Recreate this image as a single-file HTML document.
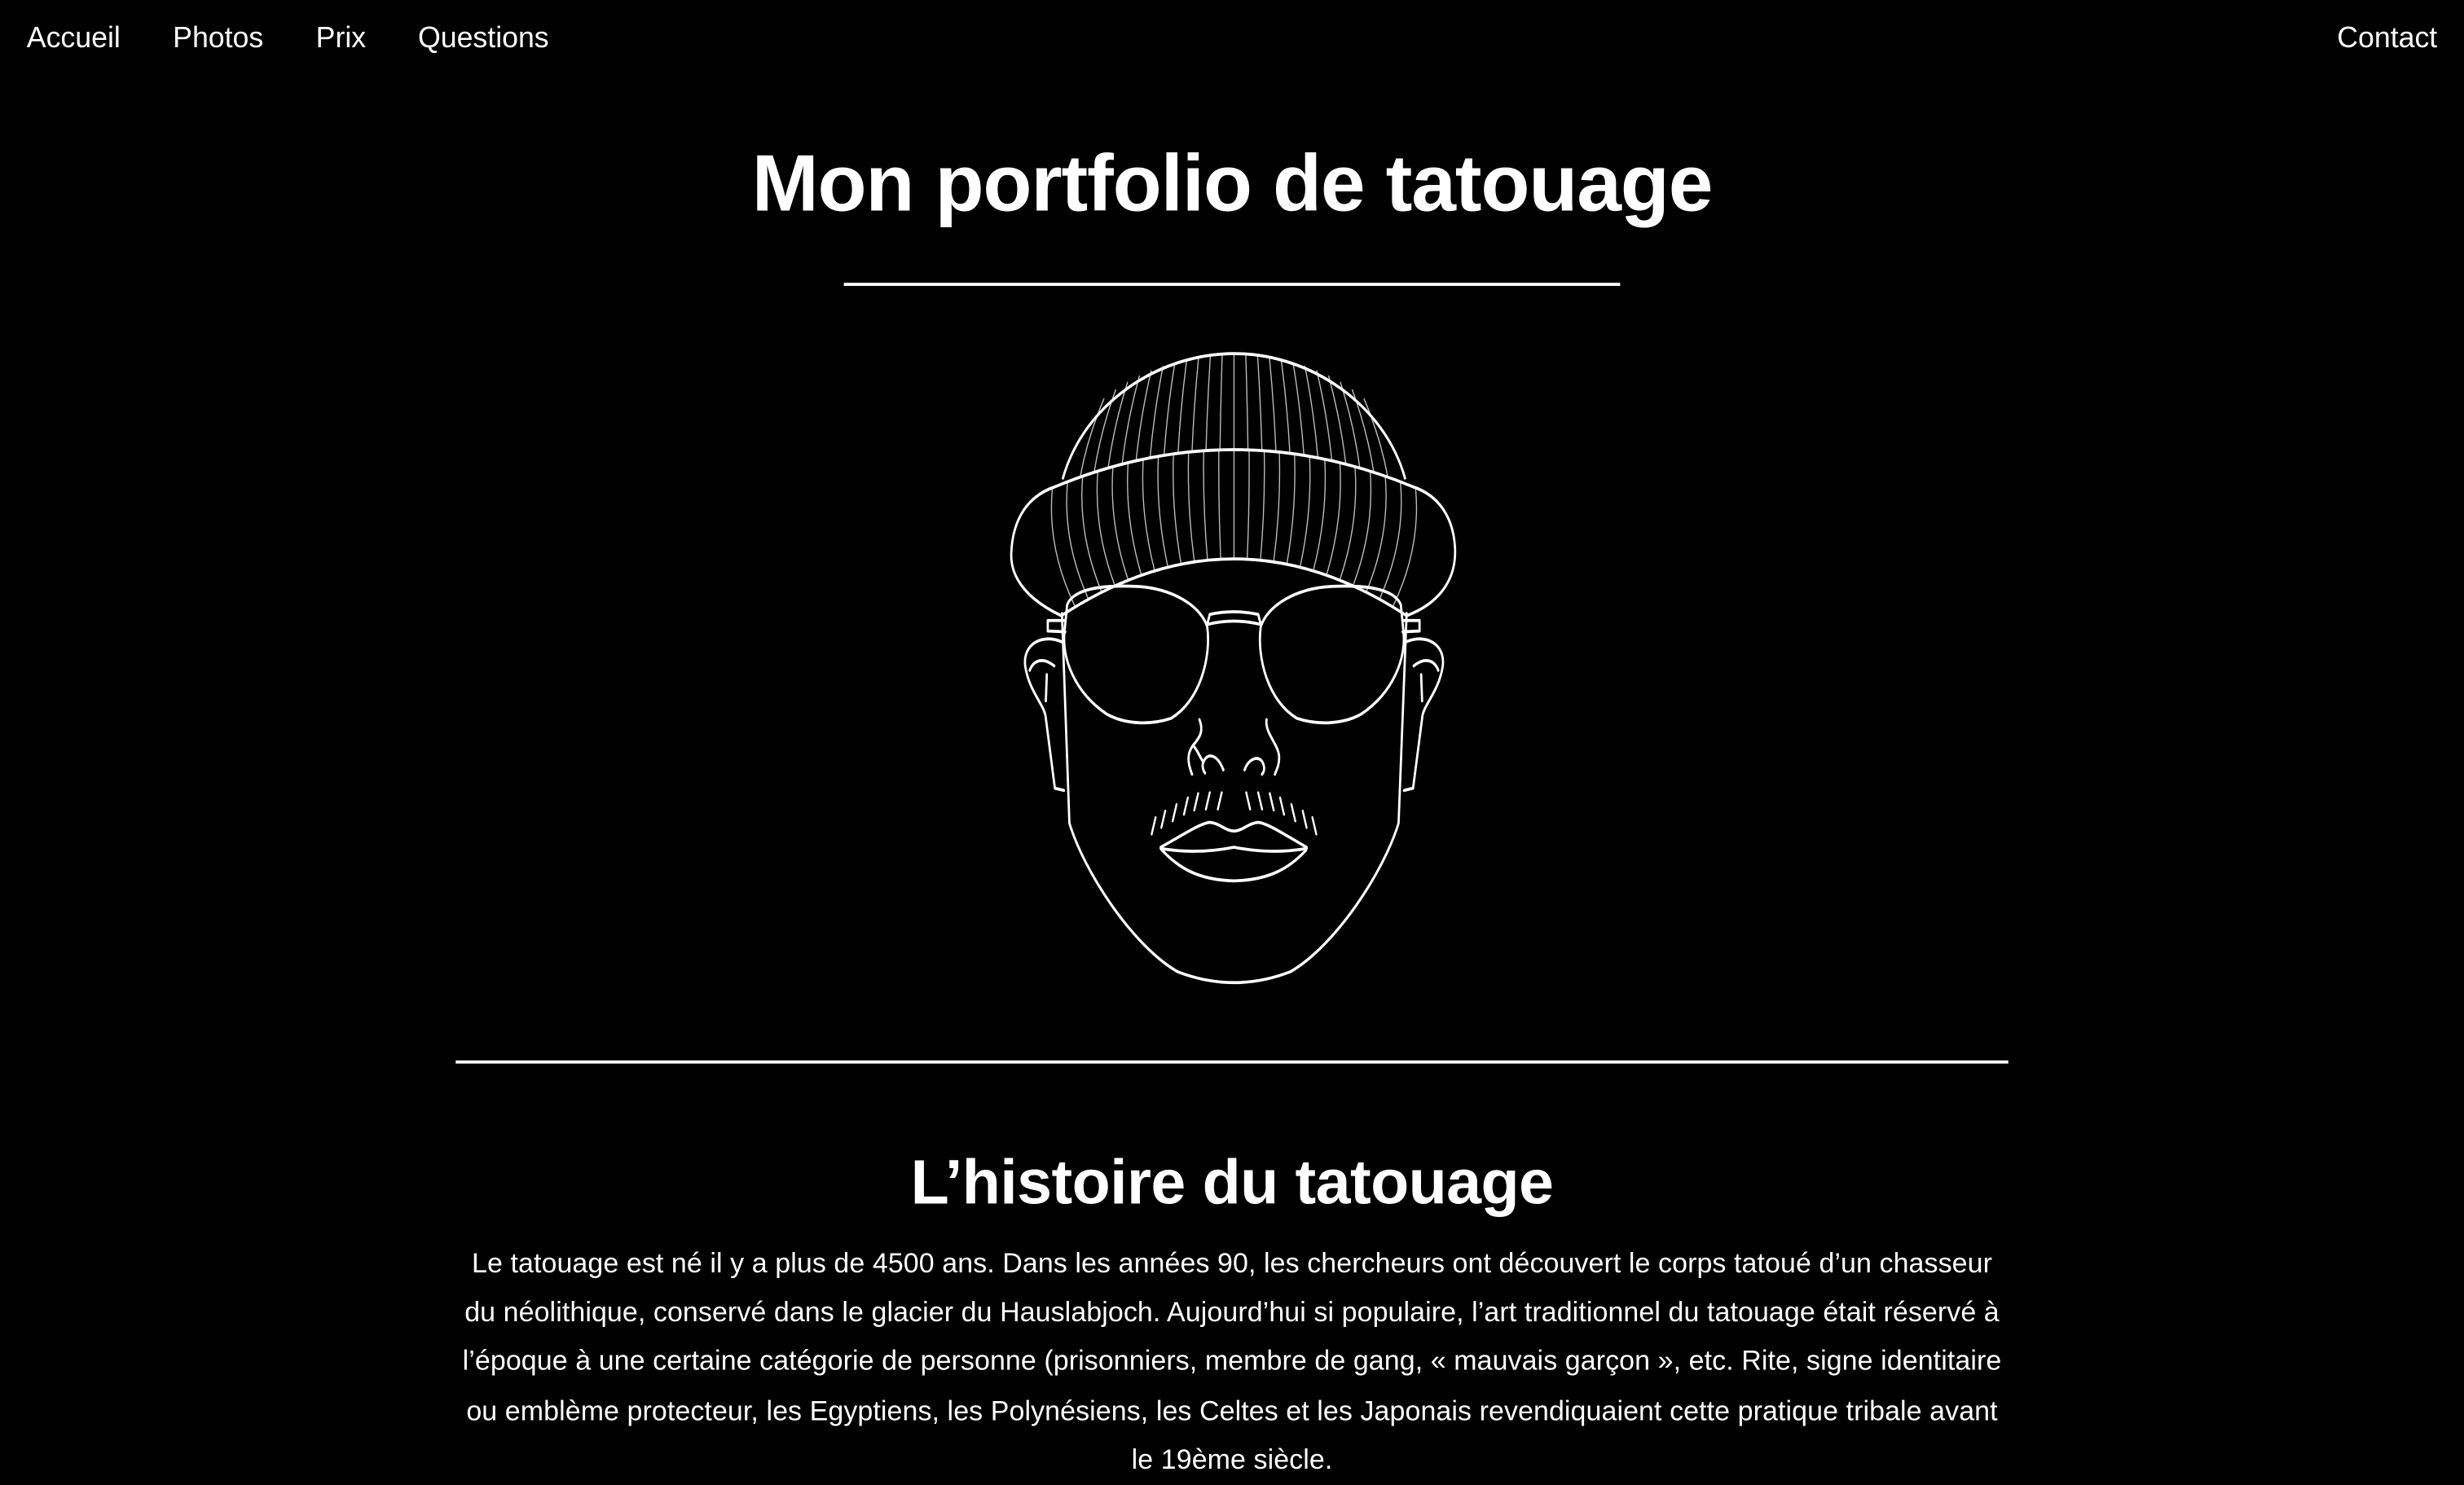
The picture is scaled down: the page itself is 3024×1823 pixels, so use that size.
<!DOCTYPE html>
<html><head><meta charset="utf-8">
<style>
html,body{margin:0;padding:0;background:#000;width:3024px;height:1784px;overflow:hidden}
#w{position:absolute;left:0;top:0;width:1568px;height:925px;transform:scale(1.928571);transform-origin:0 0;color:#fff;font-family:"Liberation Sans",Arial,sans-serif}
.n{position:absolute;top:13px;font-size:18.5px;line-height:22px}
h1{position:absolute;left:0;width:1568px;top:83px;margin:0;text-align:center;font-size:51px;line-height:68px;font-weight:bold;letter-spacing:-0.6px}
h2{position:absolute;left:0;width:1568px;top:727px;margin:0;text-align:center;font-size:40px;line-height:52px;font-weight:bold;letter-spacing:-0.3px}
.hr{position:absolute;background:#fff;height:2px}
p{position:absolute;left:188px;width:1192px;top:789px;margin:0;text-align:center;font-size:17.6px;line-height:31.2px;white-space:nowrap;letter-spacing:0.05px}
svg{position:absolute;left:622px;top:207px;width:322px;height:436px}
</style></head><body><div id="w">
<div class="n" style="left:17px">Accueil</div>
<div class="n" style="left:110px">Photos</div>
<div class="n" style="left:201px">Prix</div>
<div class="n" style="left:266px">Questions</div>
<div class="n" style="right:17px">Contact</div>
<h1>Mon portfolio de tatouage</h1>
<div class="hr" style="left:537px;width:494px;top:180px"></div>
<svg viewBox="0 0 1568 1568" preserveAspectRatio="none" fill="none" stroke="#fff" stroke-width="7" stroke-linecap="round" stroke-linejoin="round">
<g id="ribs" stroke="#bbb" stroke-width="3.5"></g>
<path d="M265,350 C330,180 560,65 795,65 C1030,65 1260,180 1325,350"/>
<path d="M260,665 C160,630 100,580 105,520 C110,440 160,390 240,370 Q795,200 1350,370 C1430,390 1475,440 1480,510 C1485,590 1420,640 1330,665"/>
<path d="M260,665 Q795,405 1330,665"/>
<path d="M262,660 L285,1140 C330,1250 480,1420 620,1480 Q795,1530 970,1480 C1110,1420 1260,1250 1305,1140 L1330,660"/>
<path d="M278,640 C300,600 400,595 492,598 C600,602 690,640 712,690 C725,760 690,860 600,900 C540,915 460,915 400,890 C300,840 260,760 270,700 Z"/>
<path d="M1312,640 C1290,600 1190,595 1098,598 C990,602 900,640 878,690 C865,760 900,860 990,900 C1050,915 1130,915 1190,890 C1290,840 1330,760 1320,700 Z"/>
<path d="M712,685 L720,662 Q795,650 870,662 L878,685 Q795,670 712,685"/>
<path d="M270,676 L218,676 L218,700 L272,702"/>
<path d="M1320,676 L1370,676 L1370,700 L1318,702"/>
<path d="M262,725 C200,705 140,730 148,780 C160,840 210,870 212,900 L240,1060 L268,1065"/>
<path d="M238,780 C205,760 175,765 162,790"/><path d="M215,800 L212,860"/>
<path d="M1328,725 C1390,705 1450,730 1442,780 C1430,840 1380,870 1378,900 L1350,1060 L1322,1065"/>
<path d="M1352,780 C1385,760 1415,765 1428,790"/><path d="M1375,800 L1378,860"/>
<path d="M688,903 C705,935 680,950 668,962 C650,980 650,1000 665,1028"/>
<path d="M668,962 C680,970 690,990 700,1000 C695,1010 700,1020 705,1025"/>
<path d="M700,1000 C715,975 745,985 762,1018"/>
<path d="M896,903 C890,935 935,960 935,990 C935,1010 925,1020 922,1028"/>
<path d="M828,1018 C840,990 880,980 888,1010 C890,1020 885,1025 882,1028"/>
<g id="mus" stroke-width="6"></g>
<path d="M568,1195 C630,1170 690,1140 720,1138 C750,1140 770,1158 795,1158 C820,1158 840,1140 870,1138 C900,1140 960,1170 1020,1195"/>
<path d="M568,1198 Q680,1212 795,1195 Q910,1212 1020,1198"/>
<path d="M570,1200 C620,1240 680,1270 795,1272 C910,1270 970,1240 1018,1202"/>
</svg>
<div class="hr" style="left:290px;width:988px;top:675px"></div>
<h2>L’histoire du tatouage</h2>
<p>Le tatouage est né il y a plus de 4500 ans. Dans les années 90, les chercheurs ont découvert le corps tatoué d’un chasseur<br>du néolithique, conservé dans le glacier du Hauslabjoch. Aujourd’hui si populaire, l’art traditionnel du tatouage était réservé à<br>l’époque à une certaine catégorie de personne (prisonniers, membre de gang, « mauvais garçon », etc. Rite, signe identitaire<br>ou emblème protecteur, les Egyptiens, les Polynésiens, les Celtes et les Japonais revendiquaient cette pratique tribale avant<br>le 19ème siècle.</p>
</div>
<script>
var r=document.getElementById('ribs'),s="";
for(var i=0;i<=24;i++){var t=-1+i/12;var xt=795+t*440,dx=(xt-795)/530;var yt=350-285*Math.sqrt(Math.max(0,1-dx*dx));
var xb=795+t*520,yb=285+85*Math.pow((xb-795)/555,2);if(Math.abs(t)<0.98)s+='<path d="M'+xt+','+(yt+4)+' Q'+(xt+(xb-xt)*0.5+t*15)+','+((yt+yb)/2)+' '+xb+','+yb+'"/>';}
for(var i=0;i<=26;i++){var t=-1+i/13;var xt=795+t*610,yt=285+85*Math.pow((xt-795)/555,2);var xb=795+t*535,yb=535+130*Math.pow((xb-795)/535,2);
if(Math.abs(t)<0.99)s+='<path d="M'+xt+','+(yt+4)+' Q'+(xt+(xb-xt)*0.3+t*40)+','+((yt+yb)/2)+' '+xb+','+(yb-4)+'"/>';}
r.innerHTML=s;
var m=document.getElementById('mus'),q="",L=[[540,1165],[570,1150],[605,1135],[640,1120],[672,1110],[708,1108],[745,1108]];
L.forEach(function(p){q+='<path d="M'+p[0]+','+p[1]+' L'+(p[0]+12)+','+(p[1]-38)+'"/>';});
L.forEach(function(p){var x=1590-p[0];q+='<path d="M'+x+','+p[1]+' L'+(x-12)+','+(p[1]-38)+'"/>';});
m.innerHTML=q;
</script>
</body></html>
